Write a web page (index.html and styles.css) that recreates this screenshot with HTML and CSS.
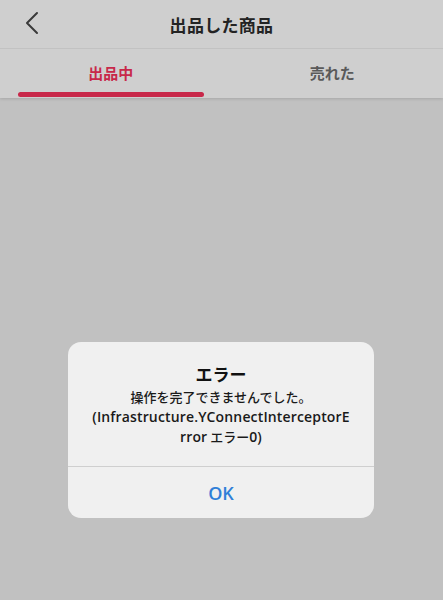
FILE: index.html
```html
<!DOCTYPE html>
<html lang="ja">
<head>
<meta charset="utf-8">
<link rel="stylesheet" href="styles.css">
</head>
<body>
<div class="screen">
  <header class="topbar">
    <span class="back">
      <svg width="14" height="24" viewBox="0 0 14 24"><path d="M12 2 L2 12 L12 22" fill="none" stroke="#3a3a3a" stroke-width="2" stroke-linecap="round" stroke-linejoin="round"/></svg>
    </span>
    <h1 class="title">出品した商品</h1>
  </header>
  <nav class="tabs">
    <div class="tab active"><span class="tab-label">出品中</span><span class="tab-bar"></span></div>
    <div class="tab"><span class="tab-label">売れた</span><span class="tab-bar"></span></div>
  </nav>
  <main class="content"></main>
  <div class="alert">
    <div class="alert-body">
      <div class="alert-title">エラー</div>
      <div class="alert-msg">操作を完了できませんでした。<br><span class="latin">(Infrastructure.YConnectInterceptorE</span><br><span class="latin">rror</span> エラー<span class="latin">0)</span></div>
    </div>
    <div class="alert-btn">OK</div>
  </div>
</div>
</body>
</html>
```
FILE: styles.css
```css
html, body { margin: 0; padding: 0; }
body {
  font-family: "Noto Sans CJK JP", "Noto Sans", sans-serif;
  background: #c1c1c1;
}
.screen {
  position: relative;
  width: 443px;
  height: 600px;
  overflow: hidden;
  display: flex;
  flex-direction: column;
  background: #c1c1c1;
}
.topbar {
  position: relative;
  height: 48px;
  background: #cfcfcf;
  border-bottom: 1px solid #c2c2c2;
  display: flex;
  align-items: center;
  justify-content: center;
  flex-shrink: 0;
}
.back {
  position: absolute;
  left: 25px;
  top: 11px;
  display: flex;
}
.title {
  margin: 0;
  font-size: 17px;
  font-weight: 700;
  color: #232323;
  letter-spacing: 0.3px;
}
.tabs {
  height: 49px;
  background: #cfcfcf;
  display: flex;
  flex-shrink: 0;
  box-shadow: 0 1px 3px rgba(0,0,0,0.14);
}
.tab {
  flex: 1;
  display: flex;
  flex-direction: column;
  align-items: stretch;
}
.tab-label {
  flex: 1;
  display: flex;
  align-items: center;
  justify-content: center;
  padding-top: 3px;
  font-size: 15px;
  font-weight: 700;
  color: #5a5a5a;
}
.tab.active .tab-label { color: #c8284a; }
.tab-bar {
  height: 5px;
  margin: 0 18px 1px;
  border-radius: 3px;
}
.tab.active .tab-bar { background: #c8284a; }
.content { flex: 1; }
.alert {
  position: absolute;
  left: 68px;
  top: 342px;
  width: 306px;
  height: 176px;
  background: #f0f0f0;
  border-radius: 13px;
  display: flex;
  flex-direction: column;
  overflow: hidden;
}
.alert-body {
  height: 125px;
  display: flex;
  flex-direction: column;
  align-items: center;
  padding-top: 20px;
  box-sizing: border-box;
  border-bottom: 1px solid #cfcfcf;
}
.alert-title {
  font-size: 17px;
  font-weight: 700;
  color: #111;
  line-height: 24px;
}
.alert-msg {
  margin-top: 1px;
  font-size: 13px;
  line-height: 20px;
  color: #1a1a1a;
  text-align: center;
  font-weight: 500;
  white-space: nowrap;
}
.latin {
  font-family: "Open Sans", sans-serif;
  font-size: 14px;
  font-weight: 600;
  letter-spacing: 0.15px;
}
.alert-btn {
  flex: 1;
  display: flex;
  align-items: center;
  justify-content: center;
  font-family: "Open Sans", "Noto Sans CJK JP", sans-serif;
  font-size: 18px;
  font-weight: 600;
  color: #2f7fd8;
}
```
